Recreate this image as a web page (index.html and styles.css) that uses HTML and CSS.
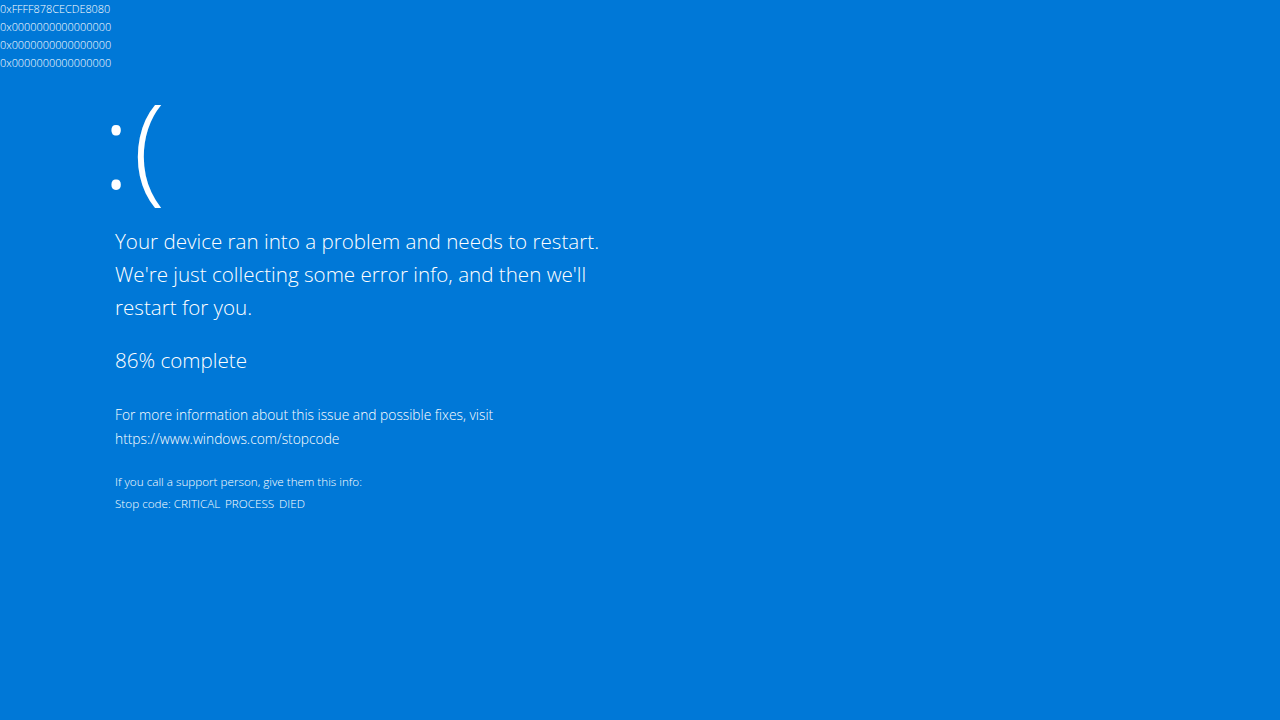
FILE: index.html
```html
<!DOCTYPE html>
<html>
<head>
<meta charset="utf-8">
<link rel="stylesheet" href="styles.css">
</head>
<body>
<div class="hex">
  <div>0xFFFF878CECDE8080</div>
  <div>0x0000000000000000</div>
  <div>0x0000000000000000</div>
  <div>0x0000000000000000</div>
</div>
<main class="content">
  <div class="face">:(</div>
  <p class="lead">Your device ran into a problem and needs to restart.<br>We're just collecting some error info, and then we'll<br>restart for you.</p>
  <p class="progress">86% complete</p>
  <p class="info">For more information about this issue and possible fixes, visit<br>https://www.windows.com/stopcode</p>
  <p class="support">If you call a support person, give them this info:<br>Stop code: CRITICAL<span class="us">_</span>PROCESS<span class="us">_</span>DIED</p>
</main>
</body>
</html>
```
FILE: styles.css
```css
html, body {
  margin: 0;
  padding: 0;
  background: #0078d7;
  color: #ffffff;
  font-family: "Open Sans", "Noto Sans", sans-serif;
  width: 1280px;
  height: 720px;
  overflow: hidden;
}
.hex {
  font-size: 10.9px;
  line-height: 18px;
  font-weight: 300;
}
.content {
  padding-left: 115px;
  padding-top: 17px;
}
.face {
  font-size: 118px;
  line-height: 110px;
  margin-left: -13px;
  font-weight: 300;
  letter-spacing: 3px;
}
.lead {
  margin: 26px 0 0 0;
  font-size: 20.6px;
  line-height: 33px;
  font-weight: 300;
}
.progress {
  margin: 20px 0 0 0;
  font-size: 20.6px;
  line-height: 33px;
  font-weight: 300;
}
.info {
  margin: 26px 0 0 0;
  font-size: 13.8px;
  line-height: 24px;
  font-weight: 300;
}
.support {
  margin: 19px 0 0 0;
  font-size: 11.7px;
  line-height: 22px;
  font-weight: 300;
}
.us {
  color: transparent;
}
```
